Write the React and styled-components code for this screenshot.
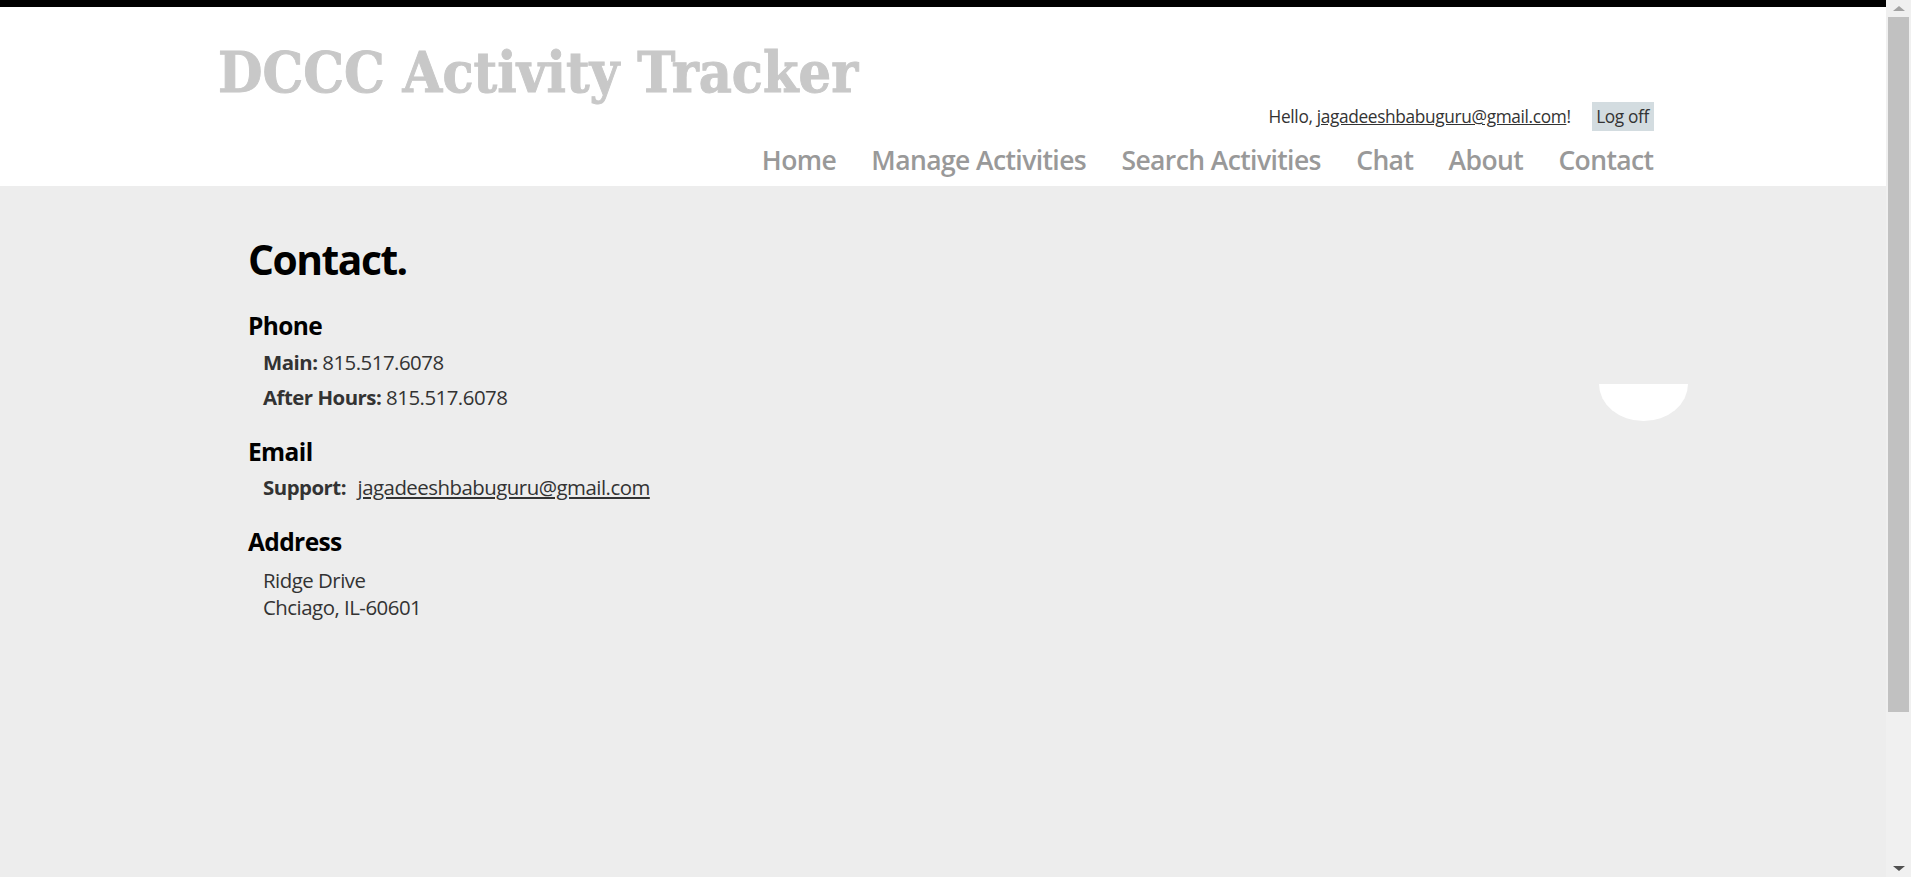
import React from "react";
import styled, { createGlobalStyle } from "styled-components";

const GlobalStyle = createGlobalStyle`
  html, body {
    margin: 0;
    padding: 0;
  }
  body {
    background-color: #e2e2e2;
    color: #333;
    font-family: "Open Sans", "Noto Sans", sans-serif;
    font-size: 20.4px;
  }
`;

const Frame = styled.div`
  display: flex;
  height: 100vh;
  overflow: hidden;
`;

const Page = styled.div`
  flex: 1;
  min-width: 0;
  display: flex;
  flex-direction: column;
  border-top: 7px solid #000;
  background-color: #fff;
`;

const ScrollBar = styled.div`
  width: 25px;
  flex-shrink: 0;
  display: flex;
  flex-direction: column;
  background-color: #f0f0f0;
`;

const ScrollArrow = styled.div`
  height: 17px;
  display: flex;
  align-items: center;
  justify-content: center;
  &::after {
    content: "";
    border-left: 6px solid transparent;
    border-right: 6px solid transparent;
    ${(p) =>
      p.$down
        ? "border-top: 5px solid #505050;"
        : "border-bottom: 5px solid #a3a3a3;"}
  }
`;

const ScrollTrack = styled.div`
  flex: 1;
  padding: 0 2px;
`;

const ScrollThumb = styled.div`
  height: 695px;
  background-color: #c1c1c1;
`;

const Header = styled.header`
  background-color: #fff;
`;

const HeaderInner = styled.div`
  display: flex;
  justify-content: space-between;
  align-items: flex-start;
  padding: 30px 228px 0 218px;
`;

const SiteTitle = styled.p`
  flex: 0 1 auto;
  min-width: 0;
  margin: 7px 0 0;
  color: #c8c8c8;
  font-family: "DejaVu Serif", serif;
  font-weight: 700;
  font-size: 56px;
  line-height: 1;
  white-space: nowrap;
  a {
    display: inline-block;
    color: inherit;
    text-decoration: none;
    -webkit-text-stroke: 1px #c8c8c8;
    transform: scaleX(0.915);
    transform-origin: left center;
  }
`;

const HeaderRight = styled.div`
  flex-shrink: 0;
  display: flex;
  flex-direction: column;
  align-items: flex-end;
  padding-top: 65px;
  white-space: nowrap;
`;

const Login = styled.section`
  display: flex;
  align-items: center;
  font-size: 17.3px;
  line-height: 23px;
  letter-spacing: -0.35px;
  color: #333;
  margin-right: 4.5px;
`;

const UserLink = styled.a`
  color: #333;
  text-decoration: underline;
`;

const LogOff = styled.a`
  display: inline-block;
  margin-left: 21px;
  padding: 3px 4.5px;
  background-color: #d3dce0;
  color: #333;
  text-decoration: none;
`;

const Menu = styled.ul`
  display: flex;
  gap: 35.3px;
  margin: 12px 4.5px 9px 0;
  padding: 0;
  list-style: none;
  font-size: 26.5px;
  font-weight: 600;
  line-height: 1.3;
  letter-spacing: -0.6px;
`;

const MenuLink = styled.a`
  color: #999;
  text-decoration: none;
`;

const Main = styled.div`
  position: relative;
  flex: 1;
  background-color: #ededed;
`;

const MainContent = styled.div`
  padding: 45px 0 0 248px;
`;

const Title = styled.h1`
  margin: 0;
  color: #000;
  font-size: 40.8px;
  font-weight: 700;
  line-height: normal;
  letter-spacing: -1.5px;
`;

const Contact = styled.section`
  margin-top: ${(p) => (p.$first ? "24px" : "26px")};
`;

const SectionHead = styled.h3`
  margin: 0;
  color: #000;
  font-size: 24.5px;
  font-weight: 700;
  line-height: 1.2;
  letter-spacing: -0.6px;
`;

const Line = styled.p`
  margin: ${(p) => (p.$tall ? "10px" : "8px")} 0 0 15px;
  line-height: 27px;
  letter-spacing: -0.5px;
  color: #333;
`;

const Label = styled.span`
  font-weight: 700;
`;

const MailLink = styled.a`
  margin-left: 11.5px;
  color: #333;
  text-decoration: underline;
`;

const ChatBubble = styled.div`
  position: absolute;
  left: 1599px;
  top: 198px;
  width: 89px;
  height: 37px;
  background: #fff;
  border-radius: 0 0 50% 50% / 0 0 100% 100%;
`;

const navItems = ["Home", "Manage Activities", "Search Activities", "Chat", "About", "Contact"];

export default function App() {
  return (
    <>
      <GlobalStyle />
      <Frame>
        <Page>
          <Header>
            <HeaderInner>
              <SiteTitle>
                <a href="#">DCCC Activity Tracker</a>
              </SiteTitle>
              <HeaderRight>
                <Login>
                  <span>
                    Hello, <UserLink href="#">jagadeeshbabuguru@gmail.com</UserLink>!
                  </span>
                  <LogOff href="#">Log off</LogOff>
                </Login>
                <nav>
                  <Menu>
                    {navItems.map((item) => (
                      <li key={item}>
                        <MenuLink href="#">{item}</MenuLink>
                      </li>
                    ))}
                  </Menu>
                </nav>
              </HeaderRight>
            </HeaderInner>
          </Header>
          <Main>
            <MainContent>
              <Title>Contact.</Title>
              <Contact $first>
                <SectionHead>Phone</SectionHead>
                <Line>
                  <Label>Main:</Label> <span>815.517.6078</span>
                </Line>
                <Line>
                  <Label>After Hours:</Label> <span>815.517.6078</span>
                </Line>
              </Contact>
              <Contact>
                <SectionHead>Email</SectionHead>
                <Line>
                  <Label>Support:</Label>
                  <MailLink href="#">jagadeeshbabuguru@gmail.com</MailLink>
                </Line>
              </Contact>
              <Contact>
                <SectionHead>Address</SectionHead>
                <Line $tall>
                  Ridge Drive
                  <br />
                  Chciago, IL-60601
                </Line>
              </Contact>
            </MainContent>
            <ChatBubble />
          </Main>
        </Page>
        <ScrollBar>
          <ScrollArrow />
          <ScrollTrack>
            <ScrollThumb />
          </ScrollTrack>
          <ScrollArrow $down />
        </ScrollBar>
      </Frame>
    </>
  );
}
